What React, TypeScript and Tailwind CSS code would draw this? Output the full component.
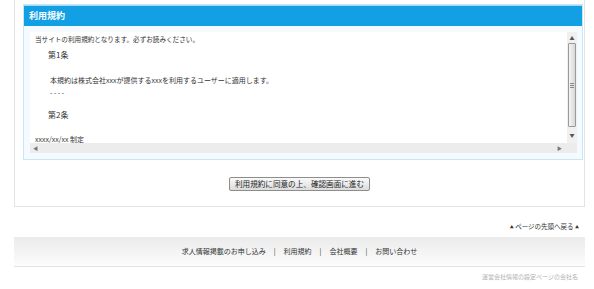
import React from "react";

const font = { fontFamily: '"Noto Sans CJK JP", "Noto Sans", sans-serif' };

const links = ["求人情報掲載のお申し込み", "利用規約", "会社概要", "お問い合わせ"];

const App: React.FC = () => {
  return (
    <div className="w-[594px] h-[289px] bg-white text-[#333] overflow-hidden" style={font}>
      {/* main box */}
      <div className="ml-[14px] w-[571px] border-x border-b border-[#e3e3e3] pt-[4px] pb-[15px]">
        <div className="ml-[8px] w-[560px] border border-[#c9e6f7] bg-[#f4faff]">
          <div className="h-[21px] bg-[#129fe4] border-t border-[#a6daf4] pl-[5px] text-[9px] leading-[20px] font-bold text-white">
            利用規約
          </div>
          <div className="p-[6px] pr-[5px]">
            <div className="relative h-[121px] bg-white">
              <div className="h-[111px] pr-[10px] overflow-hidden text-[7px]">
                <p className="pl-[5px] leading-[14px] text-[6.6px]">
                  当サイトの利用規約となります。必ずお読みください。
                </p>
                <p className="pl-[18px] mt-[2px] leading-[14px] text-[8px]">第1条</p>
                <p className="pl-[20px] mt-[12px] leading-[12px]">
                  本規約は株式会社xxxが提供するxxxを利用するユーザーに適用します。
                </p>
                <p className="pl-[20px] leading-[12px] tracking-[1.5px]">----</p>
                <p className="pl-[18px] mt-[10px] leading-[14px] text-[8px]">第2条</p>
                <p className="pl-[5px] mt-[10px] leading-[14px]">xxxx/xx/xx 制定</p>
              </div>
              {/* vertical scrollbar */}
              <div className="absolute right-0 top-0 w-[10px] h-[111px] bg-[#f0f0f0] flex flex-col items-center">
                <div className="h-[11px] flex items-center justify-center text-[5px] text-[#555]">▲</div>
                <div className="w-[8px] h-[84px] rounded-[1px] border border-[#9a9a9a] bg-gradient-to-r from-[#f4f4f4] to-[#d8d8d8] flex flex-col items-center justify-center gap-[1px]">
                  <div className="w-[4px] h-px bg-[#888]" />
                  <div className="w-[4px] h-px bg-[#888]" />
                  <div className="w-[4px] h-px bg-[#888]" />
                </div>
                <div className="flex-1 flex items-center justify-center text-[5px] text-[#555]">▼</div>
              </div>
              {/* horizontal scrollbar */}
              <div className="absolute left-0 bottom-0 w-full h-[10px] bg-[#ececec] flex items-center justify-between pl-[3px] pr-[15px] text-[5px] text-[#777]">
                <span>◀</span>
                <span>▶</span>
              </div>
            </div>
          </div>
        </div>
        <div className="mt-[17px] flex justify-center">
          <button className="h-[14px] px-[5px] border border-[#8d8d8d] rounded-[2px] bg-gradient-to-b from-[#fafafa] to-[#dcdcdc] text-[7.6px] leading-[12px] text-[#222]">
            利用規約に同意の上、確認画面に進む
          </button>
        </div>
      </div>

      <div className="mt-[14px] w-[579px] text-right text-[6.5px] leading-[10px] text-[#333]">
        <span className="text-[4px] align-middle">▲</span> ページの先頭へ戻る <span className="text-[4px] align-middle">▲</span>
      </div>

      <div className="mt-[5px] ml-[14px] w-[571px] h-[30px] border-b border-[#e3e3e3] bg-gradient-to-b from-[#ebebeb] to-[#fcfcfc] flex items-center justify-center text-[7px] text-[#333]">
        {links.map((l, i) => (
          <React.Fragment key={l}>
            {i > 0 && <span className="mx-[8px]">|</span>}
            <span>{l}</span>
          </React.Fragment>
        ))}
      </div>

      <div className="mt-[5px] w-[578px] text-right text-[6px] leading-[10px] text-[#b0b0b0]">
        運営会社情報の設定ページの会社名
      </div>
    </div>
  );
};

export default App;
